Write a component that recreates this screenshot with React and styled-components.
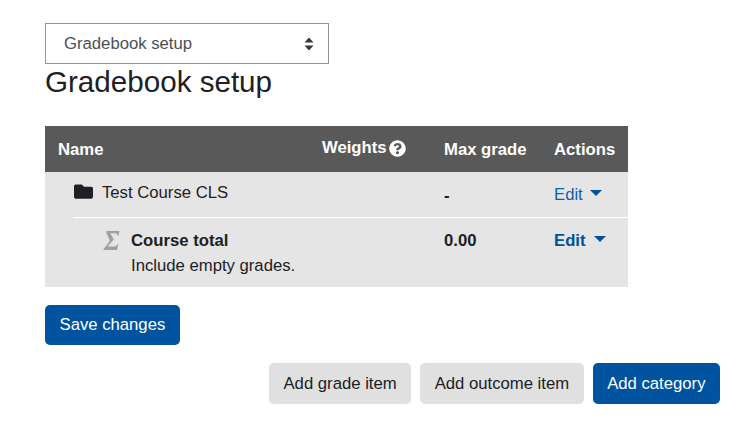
import React from "react";
import styled, { createGlobalStyle } from "styled-components";
import { FaFolder, FaQuestionCircle } from "react-icons/fa";

const GlobalStyle = createGlobalStyle`
  html, body {
    margin: 0;
    background: #fff;
    font-family: "Liberation Sans", Arial, sans-serif;
    color: #1d2125;
  }
`;

const Page = styled.div`
  width: 754px;
  height: 426px;
  box-sizing: border-box;
  padding: 23px 34px 0 45px;
  overflow: hidden;
`;

const Select = styled.div`
  width: 284px;
  height: 41px;
  box-sizing: border-box;
  border: 1px solid #8f959e;
  padding: 0 14px 0 18px;
  display: flex;
  align-items: center;
  justify-content: space-between;
  font-size: 16.7px;
  color: #495057;
`;

const Heading = styled.h2`
  margin: 0 0 27px;
  height: 35px;
  font-size: 29.6px;
  line-height: 35px;
  font-weight: 400;
`;

const Table = styled.div`
  width: 583px;
  background: #e5e5e5;
  font-size: 16.7px;
`;

const HeaderRow = styled.div`
  display: grid;
  grid-template-columns: 264px 122px 110px 87px;
  align-items: center;
  height: 46px;
  background: #595959;
  color: #fff;
  font-weight: 700;
`;

const HeaderCell = styled.div`
  padding-left: 13px;
  display: flex;
  align-items: center;
  gap: 2px;
  position: relative;
  top: ${(p) => (p.$raised ? "-1px" : "1px")};
`;

const BodyRow = styled.div`
  margin-left: 28px;
  display: grid;
  grid-template-columns: 236px 122px 110px 87px;
  height: ${(p) => p.$height}px;
  box-sizing: border-box;
  border-bottom: ${(p) => (p.$divider ? "1px solid #fff" : "none")};
  font-weight: ${(p) => (p.$bold ? 700 : 400)};
  padding-top: ${(p) => p.$top}px;
`;

const NameCell = styled.div`
  display: flex;
  align-items: flex-start;
  padding-left: ${(p) => p.$indent}px;
  gap: ${(p) => p.$gap}px;
`;

const ItemText = styled.div`
  line-height: 22px;
`;

const Note = styled.div`
  font-weight: 400;
  line-height: 22px;
  margin-top: 3px;
`;

const ValueCell = styled.div`
  grid-column: 3;
  padding: ${(p) => p.$drop || 0}px 0 0 13px;
  line-height: 22px;
  font-weight: 700;
`;

const EditLink = styled.div`
  padding: ${(p) => p.$drop || 0}px 0 0 13px;
  height: 22px;
  line-height: 22px;
  color: ${(p) => (p.$bold ? "#00529f" : "#0f5fa8")};
  display: flex;
  align-items: center;
  gap: ${(p) => (p.$bold ? 8 : 7)}px;
`;

const Caret = styled.span`
  width: 0;
  height: 0;
  margin-top: -4px;
  border-left: 6px solid transparent;
  border-right: 6px solid transparent;
  border-top: 6px solid #00529f;
`;

const FolderIcon = styled(FaFolder)`
  width: 19px;
  height: 19px;
  color: #1d2125;
`;

const SaveRow = styled.div`
  margin-top: 18px;
  display: flex;
`;

const ActionRow = styled.div`
  margin-top: 18px;
  display: flex;
  justify-content: flex-end;
  gap: 9px;
`;

const Button = styled.div`
  height: ${(p) => p.$height}px;
  padding: 0 14.5px;
  box-sizing: border-box;
  display: flex;
  align-items: center;
  border-radius: 5px;
  font-size: 16.7px;
  background: ${(p) => (p.$primary ? "#00539f" : "#e0e0e0")};
  color: ${(p) => (p.$primary ? "#fff" : "#1d2125")};
`;

const SortArrows = () => (
  <svg width="10" height="14" viewBox="0 0 10 14">
    <path d="M5 0.5 L9.5 5.5 H0.5 Z M0.5 8.5 H9.5 L5 13.5 Z" fill="#343a40" />
  </svg>
);

const SigmaIcon = () => (
  <svg width="17" height="21" viewBox="0 0 17 21">
    <path
      d="M3.5 1 H16.5 L15.6 5.5 H14.5 C14.3 4 13.5 3.3 11.5 3.3 H7.4 L10.8 9.5 L4.5 16.5 H11 C13 16.5 13.6 15.8 14.2 14.5 H15.2 L14 20 H0.5 L0.7 19 L6.8 11 L3.3 2.5 Z"
      fill="#a0a0a0"
    />
  </svg>
);

const App = () => {
  return (
    <Page>
      <GlobalStyle />
      <Select>
        Gradebook setup
        <SortArrows />
      </Select>
      <Heading>Gradebook setup</Heading>
      <Table>
        <HeaderRow>
          <HeaderCell>Name</HeaderCell>
          <HeaderCell $raised>
            Weights
            <FaQuestionCircle size={17} />
          </HeaderCell>
          <HeaderCell>Max grade</HeaderCell>
          <HeaderCell>Actions</HeaderCell>
        </HeaderRow>
        <BodyRow $height={46} $top={10} $divider>
          <NameCell $indent={1} $gap={9}>
            <FolderIcon />
            <ItemText>Test Course CLS</ItemText>
          </NameCell>
          <ValueCell $drop={3}>-</ValueCell>
          <EditLink $drop={2}>
            Edit <Caret />
          </EditLink>
        </BodyRow>
        <BodyRow $height={69} $top={12} $bold>
          <NameCell $indent={30} $gap={11}>
            <SigmaIcon />
            <div>
              <ItemText>Course total</ItemText>
              <Note>Include empty grades.</Note>
            </div>
          </NameCell>
          <ValueCell>0.00</ValueCell>
          <EditLink $bold>
            Edit <Caret />
          </EditLink>
        </BodyRow>
      </Table>
      <SaveRow>
        <Button $primary $height={40}>
          Save changes
        </Button>
      </SaveRow>
      <ActionRow>
        <Button $height={41}>Add grade item</Button>
        <Button $height={41}>Add outcome item</Button>
        <Button $primary $height={41}>
          Add category
        </Button>
      </ActionRow>
    </Page>
  );
};

export default App;
